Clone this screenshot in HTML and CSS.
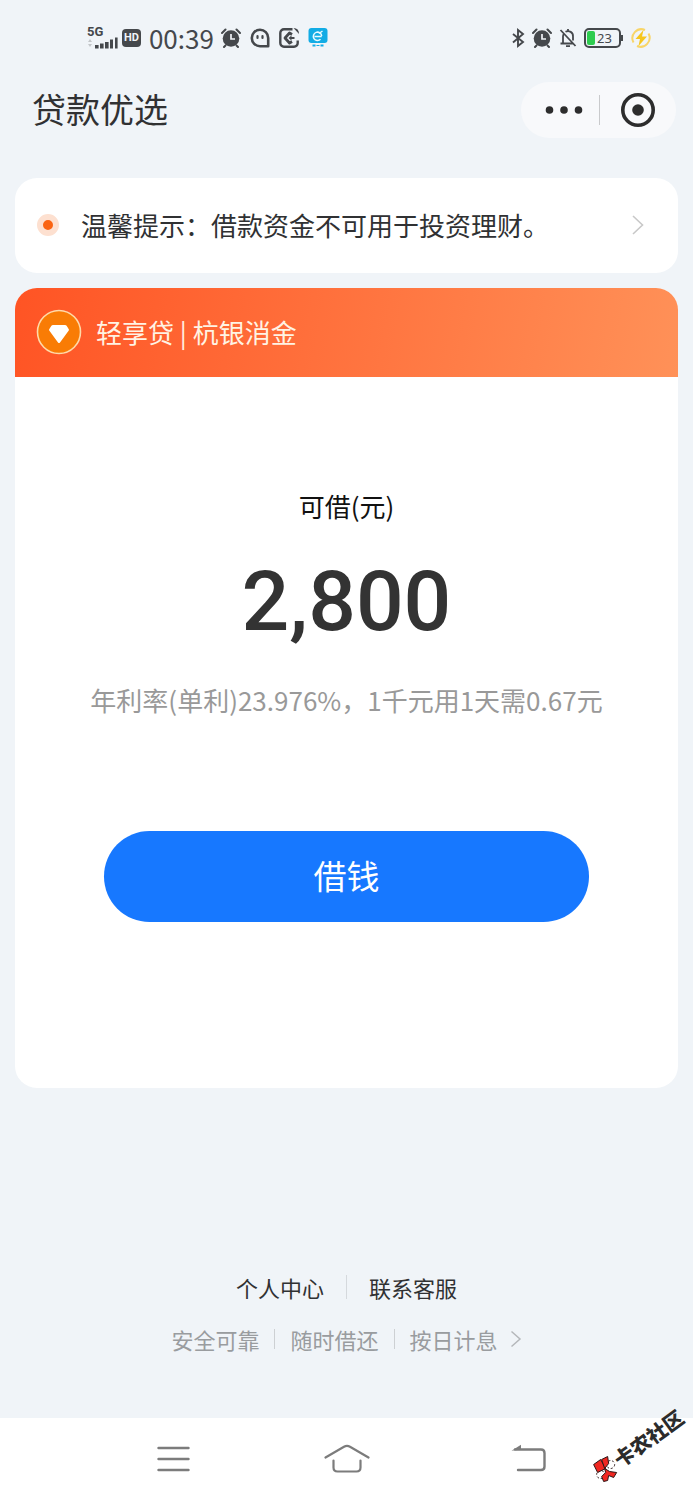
FILE: index.html
```html
<!DOCTYPE html>
<html lang="zh-CN">
<head>
<meta charset="utf-8">
<meta name="viewport" content="width=device-width, initial-scale=1">
<title>贷款优选</title>
<link rel="stylesheet" href="styles.css">
</head>
<body>
<div class="page">
  <div class="status">
    <div class="status-group">
      <div class="network">
        <span class="network-type">5G</span>
        <svg width="31" height="12" viewBox="0 0 31 12" aria-hidden="true">
          <path d="M1 5l2-3 2 3zM1 7l2 3 2-3z" fill="#c3c6c9"/>
          <path d="M8 8h3.600v3.500H8zM13 6.500h3.600v5H13zM18 5h3.600v6.500H18zM23 2.500h3v9h-3zM28 .5h2.600v11H28z" fill="#45484c"/>
        </svg>
      </div>
      <span class="hd">HD</span>
      <span class="time">00:39</span>
      <svg width="20" height="20" viewBox="0 0 20 20" aria-hidden="true">
        <circle cx="10" cy="10.500" r="8.300" fill="#45484c"/>
        <path d="M1 5L4.500 1.500M19 5L15.500 1.500M4.500 17.500L3 19M15.500 17.500L17 19" stroke="#45484c" stroke-width="2" stroke-linecap="round"/>
        <path d="M10 6v5h4" fill="none" stroke="#f0f3f7" stroke-width="1.700"/>
      </svg>
      <svg width="20" height="20" viewBox="0 0 20 20" aria-hidden="true">
        <path d="M18.200 18.200H10A8.200 8.200 0 1 1 18.200 10z" fill="none" stroke="#45484c" stroke-width="2.600" stroke-linejoin="round"/>
        <path d="M7.500 8v2M12.500 8v2" stroke="#45484c" stroke-width="2.200" stroke-linecap="round"/>
      </svg>
      <svg width="20" height="20" viewBox="0 0 20 20" aria-hidden="true">
        <path d="M13.500 1.300H5A3.700 3.700 0 0 0 1.300 5v10A3.700 3.700 0 0 0 5 18.700h10a3.700 3.700 0 0 0 3.700-3.700v-2.500" fill="none" stroke="#45484c" stroke-width="2.400"/>
        <path d="M13 6.500L10.500 5 6 10l4.500 5 2.500-1.500" fill="none" stroke="#45484c" stroke-width="2.800" stroke-linejoin="round"/>
        <path d="M9.500 10l3-2.500V9h3v2h-3v1.500zM14.500 0Q20 0 20 6z" fill="#45484c"/>
      </svg>
      <svg width="20" height="20" viewBox="0 0 20 20" aria-hidden="true">
        <rect x=".5" y="0" width="19" height="15" rx="3" fill="#12ace5"/>
        <path d="M6.500 8.500h7.200M13.700 8A4.200 4.200 0 1 0 12.500 11.300M11 5.500L14.500 3" fill="none" stroke="#eafaff" stroke-width="1.500"/>
        <path d="M4.500 17.500h3M12.500 17.500h3" stroke="#12ace5" stroke-width="2"/>
        <path d="M8.500 17.500h3" stroke="#12ace5"/>
      </svg>
    </div>
    <div class="status-group status-right">
      <svg width="14" height="20" viewBox="0 0 14 20" aria-hidden="true">
        <path d="M2 6l10 8-5 4V2l5 4L2 14.500" fill="none" stroke="#45484c" stroke-width="1.900"/>
      </svg>
      <svg width="20" height="20" viewBox="0 0 20 20" aria-hidden="true">
        <circle cx="10" cy="10.500" r="8.300" fill="#45484c"/>
        <path d="M1 5L4.500 1.500M19 5L15.500 1.500M4.500 17.500L3 19M15.500 17.500L17 19" stroke="#45484c" stroke-width="2" stroke-linecap="round"/>
        <path d="M10 6v5h4" fill="none" stroke="#f0f3f7" stroke-width="1.700"/>
      </svg>
      <svg width="18" height="20" viewBox="0 0 18 20" aria-hidden="true">
        <path d="M1.500 15.500h13M4 15V8.500a5 5 0 0 1 1-3M6.500 3.800A5 5 0 0 1 14 8.500v4M9 1v2M7 18.200h4M1.500 2l15 16" fill="none" stroke="#45484c" stroke-width="1.800"/>
      </svg>
      <div class="battery"><span class="battery-level"></span><span class="battery-text">23</span></div>
      <svg width="20" height="20" viewBox="0 0 20 20" aria-hidden="true">
        <path d="M14 2A9 9 0 0 0 2.500 14.500M17.500 5.500A9 9 0 0 1 6 18" fill="none" stroke="#f8d568" stroke-width="2"/>
        <path d="M12.500 2L4.500 11h4.500l-1.500 7L16 8.500h-5z" fill="#f6c61d"/>
      </svg>
    </div>
  </div>

  <header class="header">
    <h1 class="title">贷款优选</h1>
    <div class="capsule">
      <button class="capsule-button" type="button" aria-label="更多">
        <svg width="38" height="8" viewBox="0 0 38 8"><g fill="#2d2d2d"><circle cx="4.500" cy="4" r="3.800"/><circle cx="19" cy="4" r="3.800"/><circle cx="33.500" cy="4" r="3.800"/></g></svg>
      </button>
      <span class="capsule-divider"></span>
      <button class="capsule-button" type="button" aria-label="关闭">
        <svg width="36" height="36" viewBox="0 0 36 36"><circle cx="18" cy="18" r="15.200" fill="none" stroke="#2d2d2d" stroke-width="3.600"/><circle cx="18" cy="18" r="5.800" fill="#2d2d2d"/></svg>
      </button>
    </div>
  </header>

  <main class="content">
    <a class="notice" href="#notice">
      <span class="notice-dot"></span>
      <span class="notice-text">温馨提示：借款资金不可用于投资理财。</span>
      <svg width="12" height="20" viewBox="0 0 12 20" aria-hidden="true"><path d="M1 1l9.500 9L1 19" fill="none" stroke="#c8c8c8" stroke-width="1.600"/></svg>
    </a>

    <section class="card">
      <div class="card-head">
        <svg width="46" height="46" viewBox="0 0 46 46" aria-hidden="true">
          <circle cx="23" cy="23" r="21.500" fill="#f97c05" stroke="#ffd9a8" stroke-width="1.600"/>
          <path d="M17 16h12q1 0 1.600.8l2.200 3.400q.5.800-.2 1.600L24 33.500q-1 1.100-2 0L13.400 21.800q-.7-.8-.2-1.600l2.200-3.400q.6-.8 1.600-.8z" fill="#fff"/>
        </svg>
        <h2 class="card-title">轻享贷 | 杭银消金</h2>
      </div>
      <div class="card-body">
        <p class="label">可借(元)</p>
        <p class="amount">2,800</p>
        <p class="rate">年利率(单利)23.976%，1千元用1天需0.67元</p>
        <button class="borrow" type="button">借钱</button>
      </div>
    </section>
  </main>

  <footer class="footer">
    <div class="links">
      <a href="#me">个人中心</a>
      <span class="links-divider"></span>
      <a href="#service">联系客服</a>
    </div>
    <a class="promises" href="#promises">
      <span>安全可靠</span>
      <span class="promise-divider"></span>
      <span>随时借还</span>
      <span class="promise-divider"></span>
      <span>按日计息</span>
      <svg width="12" height="18" viewBox="0 0 12 18" aria-hidden="true"><path d="M1.500 1.500L10 9l-8.500 7.500" fill="none" stroke="#b4b7ba" stroke-width="1.500"/></svg>
    </a>
  </footer>

  <nav class="navbar">
    <button class="nav-button" type="button" aria-label="菜单">
      <svg width="46" height="32" viewBox="0 0 46 32"><path d="M8.500 5h30M8.500 16h30M8.500 27h30" stroke="#7c7c7c" stroke-width="2.400" stroke-linecap="round"/></svg>
    </button>
    <button class="nav-button" type="button" aria-label="主页">
      <svg width="46" height="32" viewBox="0 0 46 32"><path d="M1.500 14.500L20 3.700q3-1.700 6 0L44.500 14.500M9.500 17.500v7q0 4 4 4h19q4 0 4-4v-7" fill="none" stroke="#7c7c7c" stroke-width="2.200" stroke-linecap="round"/></svg>
    </button>
    <button class="nav-button" type="button" aria-label="返回">
      <svg width="66" height="32" viewBox="0 0 66 32"><path d="M28 6.500h26q3.500 0 3.500 3.500v13.500q0 3.500-3.500 3.500H31" fill="none" stroke="#7c7c7c" stroke-width="2.400" stroke-linecap="round"/><path d="M24.500 7.700l9.500-6v4.800z" fill="#7c7c7c"/></svg>
    </button>
  </nav>

  <div class="watermark">
    <svg class="watermark-logo" width="26" height="28" viewBox="0 0 26 28" aria-hidden="true">
      <g stroke="#2a1515" stroke-width="1">
        <circle cx="18" cy="9" r="4" fill="#fff" stroke-dasharray="2 2"/>
        <circle cx="8" cy="19" r="4" fill="#fff" stroke-dasharray="2 2"/>
        <path d="M1 9l7-5 5 9-8 4z" fill="#ef2721"/>
        <path d="M9 4l6-3 1 7-4 5z" fill="#ef2721"/>
        <path d="M12 13l5 3 7 1-3 5-5-2-1 5-4 1-2-5 4-4z" fill="#ef2721"/>
      </g>
    </svg>
    <span class="watermark-text">卡农社区</span>
  </div>
</div>
</body>
</html>
```
FILE: styles.css
```css
* {
  box-sizing: border-box;
}

body {
  margin: 0;
  background: #f0f4f8;
  color: #303133;
  font-family: "Noto Sans CJK SC", "Noto Sans", sans-serif;
}

h1, h2, p {
  margin: 0;
  font-weight: 400;
}

button {
  margin: 0;
  padding: 0;
  border: 0;
  background: none;
  font: inherit;
  color: inherit;
  cursor: pointer;
}

a {
  color: inherit;
  text-decoration: none;
}

svg {
  display: block;
  flex: none;
}

.page {
  position: relative;
  display: flex;
  flex-direction: column;
  min-height: 100vh;
}

.status {
  display: flex;
  justify-content: space-between;
  align-items: center;
  height: 76px;
  padding: 0 42px 0 87px;
  color: #45484c;
}

.status-group {
  display: flex;
  align-items: center;
  gap: 9px;
}

.status-right {
  gap: 7px;
}

.network {
  display: flex;
  flex-direction: column;
  margin-right: -5px;
}

.network-type {
  font: 700 13px/10px Roboto, sans-serif;
}

.hd {
  margin-right: -1px;
  padding: 0 2px;
  border-radius: 4px;
  background: #45484c;
  color: #f0f4f8;
  font: 700 11px/18px Roboto, sans-serif;
}

.time {
  margin-right: -2px;
  font-size: 26px;
  line-height: 36px;
}

.battery {
  position: relative;
  display: flex;
  width: 37px;
  height: 20px;
  margin-right: 3px;
  padding: 1px;
  border: 2px solid #45484c;
  border-radius: 5px;
}

.battery::after {
  content: "";
  position: absolute;
  top: 5px;
  right: -4px;
  width: 2px;
  height: 6px;
  background: #45484c;
}

.battery-level {
  width: 8px;
  border-radius: 2px;
  background: #2ecc4f;
}

.battery-text {
  flex: 1;
  padding-right: 4px;
  text-align: center;
  font: 13px/14px "Noto Sans", sans-serif;
}

.header {
  display: flex;
  justify-content: space-between;
  align-items: center;
  padding: 6px 17px 0 32px;
}

.title {
  padding-bottom: 2px;
  font-size: 34px;
  line-height: 48px;
}

.capsule {
  display: flex;
  align-items: center;
  width: 155px;
  height: 56px;
  border-radius: 28px;
  background: #f8f9fb;
}

.capsule-button {
  display: flex;
  flex: 1;
  justify-content: center;
  align-items: center;
  height: 100%;
}

.capsule-button:first-child {
  padding-left: 8px;
}

.capsule-divider {
  width: 1px;
  height: 30px;
  background: #c9cacc;
}

.capsule-button {
  min-width: 0;
}

.capsule-button:first-child {
  flex: 0 0 50%;
}

.content {
  display: flex;
  flex-direction: column;
  gap: 15px;
  padding: 40px 15px 0;
}

.notice {
  display: flex;
  align-items: center;
  height: 95px;
  padding: 0 34px 2px 22px;
  border-radius: 22px;
  background: #fff;
  font-size: 26px;
  line-height: 38px;
}

.notice-dot {
  width: 22px;
  height: 22px;
  border: 6px solid #fde0d0;
  border-radius: 50%;
  background: #fa6413;
}

.notice-text {
  flex: 1;
  margin-left: 22px;
}

.card {
  overflow: hidden;
  border-radius: 22px;
  background: #fff;
}

.card-head {
  display: flex;
  align-items: center;
  gap: 14px;
  height: 89px;
  padding: 0 21px 2px;
  background: linear-gradient(100deg, #ff5424, #ff9158);
  color: #fff3e4;
}

.card-title {
  font-size: 26px;
  line-height: 38px;
}

.card-body {
  display: flex;
  flex-direction: column;
  align-items: center;
  padding: 110px 16px 166px;
}

.label {
  color: #111;
  font-size: 26px;
  line-height: 38px;
}

.amount {
  margin-top: 25px;
  color: #333;
  font: 500 84px/104px Roboto, sans-serif;
}

.rate {
  margin-top: 27px;
  color: #999;
  font-size: 26px;
  line-height: 38px;
  text-align: center;
}

.borrow {
  width: 77%;
  height: 91px;
  margin-top: 112px;
  padding-bottom: 3px;
  border-radius: 46px;
  background: #1778ff;
  color: #fff;
  font-size: 33px;
}

.footer {
  display: flex;
  flex-direction: column;
  align-items: center;
  gap: 20px;
  margin-top: auto;
  padding: 80px 16px 63px;
  font-size: 22px;
  line-height: 32px;
}

.links {
  display: flex;
  align-items: center;
  gap: 22px;
}

.links-divider {
  width: 1px;
  height: 24px;
  background: #d5d9dd;
}

.promises {
  display: flex;
  align-items: center;
  gap: 15px;
  color: #999c9f;
}

.promises svg {
  margin-left: -3px;
}

.promise-divider {
  width: 1px;
  height: 20px;
  background: #cdd0d3;
}

.navbar {
  display: flex;
  justify-content: center;
  align-items: center;
  height: 82px;
  background: #fff;
}

.nav-button {
  display: flex;
  justify-content: center;
  align-items: center;
  width: 25%;
  height: 100%;
}

.watermark {
  position: absolute;
  right: 2px;
  bottom: 40px;
  display: flex;
  align-items: center;
  transform: rotate(-36deg);
}

.watermark-logo {
  transform: rotate(36deg);
}

.watermark-text {
  color: #2b2b2b;
  font-size: 20px;
  font-weight: 900;
  line-height: 24px;
}
```
